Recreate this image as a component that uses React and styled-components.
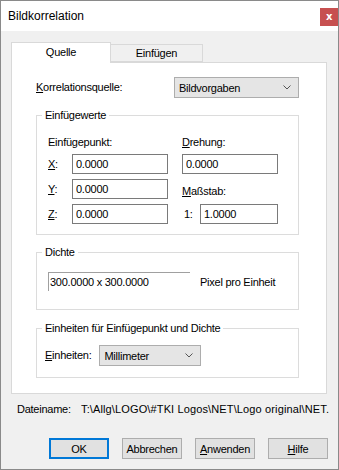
import React from "react";
import styled, { createGlobalStyle } from "styled-components";

const GlobalStyle = createGlobalStyle`
  html, body {
    margin: 0;
    padding: 0;
    background: #ffffff;
  }
  * {
    box-sizing: border-box;
  }
`;

const Window = styled.div`
  width: 339px;
  height: 470px;
  border: 1px solid #8a8a8a;
  background: #f0f0f0;
  display: flex;
  flex-direction: column;
  font-family: "Liberation Sans", Arial, sans-serif;
  font-size: 11px;
  letter-spacing: -0.25px;
  color: #000;
  overflow: hidden;
`;

const TitleBar = styled.div`
  height: 30px;
  background: #ffffff;
  display: flex;
  justify-content: space-between;
  align-items: flex-start;
  padding-left: 7px;
`;

const Title = styled.div`
  font-size: 12px;
  letter-spacing: 0;
  line-height: 30px;
`;

const CloseButton = styled.div`
  width: 18px;
  height: 18px;
  margin-top: 7px;
  background: #c75050;
  color: #fff;
  font-family: "DejaVu Sans", sans-serif;
  font-weight: bold;
  font-size: 10px;
  line-height: 17px;
  text-align: center;
`;

const Body = styled.div`
  flex: 1;
  padding: 11px 10px 0 10px;
  display: flex;
  flex-direction: column;
`;

const TabStrip = styled.div`
  display: flex;
  align-items: flex-end;
  position: relative;
  z-index: 1;
  margin-bottom: -1px;
`;

const Tab = styled.div`
  width: ${(p) => (p.$active ? "100px" : "93px")};
  height: ${(p) => (p.$active ? "21px" : "18px")};
  margin-left: ${(p) => (p.$active ? "0" : "-1px")};
  margin-bottom: ${(p) => (p.$active ? "0" : "1px")};
  background: ${(p) => (p.$active ? "#ffffff" : "#f0f0f0")};
  border: 1px solid #d9d9d9;
  border-bottom: ${(p) => (p.$active ? "none" : "1px solid #d9d9d9")};
  display: flex;
  align-items: center;
  justify-content: center;
  padding-bottom: ${(p) => (p.$active ? "2px" : "0")};
`;

const Panel = styled.div`
  width: 316px;
  height: 332px;
  background: #ffffff;
  border: 1px solid #d9d9d9;
  padding: 14px 0 0 24px;
  display: flex;
  flex-direction: column;
`;

const SourceRow = styled.div`
  width: 263px;
  display: flex;
  justify-content: space-between;
  align-items: center;
`;

const Combo = styled.div`
  width: ${(p) => p.$width}px;
  height: 21px;
  background: #e5e5e5;
  border: 1px solid #adadad;
  display: flex;
  align-items: center;
  justify-content: space-between;
  padding: 0 7px 0 4px;
`;

const Chevron = () => (
  <svg width="8" height="5" viewBox="0 0 8 5">
    <polyline points="0.5,0.5 4,4 7.5,0.5" fill="none" stroke="#555" strokeWidth="1" />
  </svg>
);

const Group = styled.fieldset`
  width: 263px;
  margin: ${(p) => p.$top}px 0 0 0;
  border: 1px solid #dcdcdc;
  padding: ${(p) => p.$pt}px 0 ${(p) => p.$pb}px ${(p) => p.$pl}px;
  min-width: 0;
`;

const Legend = styled.legend`
  padding: 0 3px;
  margin-left: ${(p) => p.$ml}px;
  line-height: 14px;
`;

const ValuesGrid = styled.div`
  display: grid;
  grid-template-columns: 120px 110px;
  grid-template-rows: 13px 20px 20px 20px;
  row-gap: 5px;
  column-gap: 14px;
  align-items: center;
`;

const Label = styled.span`
  line-height: 13px;
  white-space: nowrap;
  align-self: ${(p) => p.$align || "center"};
  margin-bottom: ${(p) => p.$mb || 0}px;
`;

const Key = styled.u`
  text-decoration: underline;
  text-underline-offset: 1px;
`;

const FieldRow = styled.div`
  display: flex;
  align-items: center;
`;

const Prefix = styled.span`
  width: ${(p) => p.$width}px;
  padding-left: ${(p) => p.$pad || 0}px;
`;

const TextBox = styled.input`
  width: ${(p) => p.$width}px;
  height: 20px;
  border: 1px solid #7a7a7a;
  background: #fff;
  padding: 0 0 0 3px;
  margin: 0;
  font-family: "Liberation Sans", Arial, sans-serif;
  font-size: 11px;
  letter-spacing: -0.25px;
  color: #000;
  outline: none;
`;

const DensityRow = styled.div`
  display: flex;
  align-items: center;
  gap: 10px;
`;

const StaticField = styled.div`
  width: 142px;
  height: 19px;
  border-top: 1px solid #a0a0a0;
  border-left: 1px solid #a0a0a0;
  line-height: 18px;
  padding-left: 1px;
`;

const UnitRow = styled.div`
  display: flex;
  align-items: center;
  gap: 8px;
`;

const FileRow = styled.div`
  margin: 9px 0 0 6px;
  display: flex;
  line-height: 13px;
  white-space: nowrap;
  overflow: hidden;
  width: 314px;
`;

const FileLabel = styled.span`
  width: 64px;
  flex: none;
`;

const FilePath = styled.span`
  overflow: hidden;
  letter-spacing: 0.13px;
`;

const ButtonRow = styled.div`
  margin-top: 22px;
  display: flex;
  justify-content: flex-end;
  gap: 13px;
  width: 317px;
`;

const Button = styled.div`
  width: 60px;
  height: 21px;
  background: #e1e1e1;
  border: ${(p) => (p.$primary ? "2px solid #0078d7" : "1px solid #adadad")};
  display: flex;
  align-items: center;
  justify-content: center;
`;

export default function App() {
  return (
    <>
      <GlobalStyle />
      <Window>
        <TitleBar>
          <Title>Bildkorrelation</Title>
          <CloseButton>x</CloseButton>
        </TitleBar>
        <Body>
          <TabStrip>
            <Tab $active>Quelle</Tab>
            <Tab>Einfügen</Tab>
          </TabStrip>
          <Panel>
            <SourceRow>
              <Label>
                <Key>K</Key>orrelationsquelle:
              </Label>
              <Combo $width={125}>
                <span>Bildvorgaben</span>
                <Chevron />
              </Combo>
            </SourceRow>

            <Group $top={10} $pt={14} $pb={10} $pl={11}>
              <Legend $ml={-6}>Einfügewerte</Legend>
              <ValuesGrid>
                <Label>Einfügepunkt:</Label>
                <Label>
                  <Key>D</Key>rehung:
                </Label>
                <FieldRow>
                  <Prefix $width={24}>
                    <Key>X</Key>:
                  </Prefix>
                  <TextBox $width={96} readOnly defaultValue="0.0000" />
                </FieldRow>
                <TextBox $width={96} readOnly defaultValue="0.0000" />
                <FieldRow>
                  <Prefix $width={24}>
                    <Key>Y</Key>:
                  </Prefix>
                  <TextBox $width={96} readOnly defaultValue="0.0000" />
                </FieldRow>
                <Label $align="end" $mb={1}>
                  <Key>M</Key>aßstab:
                </Label>
                <FieldRow>
                  <Prefix $width={24}>
                    <Key>Z</Key>:
                  </Prefix>
                  <TextBox $width={96} readOnly defaultValue="0.0000" />
                </FieldRow>
                <FieldRow>
                  <Prefix $width={18} $pad={2}>
                    1:
                  </Prefix>
                  <TextBox $width={78} readOnly defaultValue="1.0000" />
                </FieldRow>
              </ValuesGrid>
            </Group>

            <Group $top={10} $pt={13} $pb={18} $pl={11}>
              <Legend $ml={-6}>Dichte</Legend>
              <DensityRow>
                <StaticField>300.0000 x 300.0000</StaticField>
                <span>Pixel pro Einheit</span>
              </DensityRow>
            </Group>

            <Group $top={11} $pt={10} $pb={11} $pl={8}>
              <Legend $ml={-3}>Einheiten für Einfügepunkt und Dichte</Legend>
              <UnitRow>
                <Label>
                  <Key>E</Key>inheiten:
                </Label>
                <Combo $width={102}>
                  <span>Millimeter</span>
                  <Chevron />
                </Combo>
              </UnitRow>
            </Group>
          </Panel>

          <FileRow>
            <FileLabel>Dateiname:</FileLabel>
            <FilePath>T:\Allg\LOGO\#TKI Logos\NET\Logo original\NET.</FilePath>
          </FileRow>

          <ButtonRow>
            <Button $primary>OK</Button>
            <Button>Abbrechen</Button>
            <Button>
              <span>
                <Key>A</Key>nwenden
              </span>
            </Button>
            <Button>
              <span>
                <Key>H</Key>ilfe
              </span>
            </Button>
          </ButtonRow>
        </Body>
      </Window>
    </>
  );
}
